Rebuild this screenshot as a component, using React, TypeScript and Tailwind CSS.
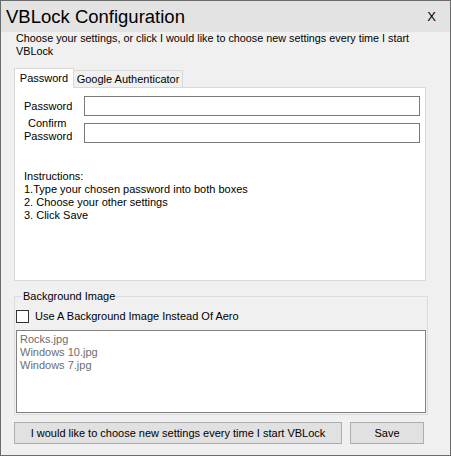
import { useState } from 'react';

function App() {
  const [useImage, setUseImage] = useState(false);
  const [tab, setTab] = useState<'password' | 'google'>('password');
  const images = ['Rocks.jpg', 'Windows 10.jpg', 'Windows 7.jpg'];

  return (
    <div
      className="w-[451px] h-[456px] flex flex-col border border-[#6b6b6b] bg-[#f0f0f0] text-[11px] leading-[13px] text-black overflow-hidden whitespace-nowrap"
      style={{ fontFamily: '"Liberation Sans", Arial, sans-serif' }}
    >
      {/* Title bar */}
      <div className="h-[31px] shrink-0 flex items-center justify-between bg-[#e3e3e3] pl-[5px] pr-[14px]">
        <span className="text-[18.5px] leading-[24px] pt-[1px]">VBLock Configuration</span>
        <span className="text-[13px] leading-[14px]">X</span>
      </div>

      {/* Body */}
      <div className="flex flex-col pl-[13px]">
        <p className="ml-[2px] text-[10.8px]">
          Choose your settings, or click I would like to choose new settings every time I start
          <br />
          VBLock
        </p>

        {/* Tabs */}
        <div className="mt-[10px] flex items-end h-[19px]">
          <button
            onClick={() => setTab('password')}
            className="h-[20px] w-[60px] bg-white border border-b-0 border-[#d9d9d9] relative z-10 -mb-[1px] text-[11px]"
          >
            Password
          </button>
          <button
            onClick={() => setTab('google')}
            className="h-[17px] w-[109px] bg-[#f0f0f0] border border-l-0 border-b-0 border-[#d9d9d9] text-[11px] leading-[15px] pt-[1px]"
          >
            Google Authenticator
          </button>
        </div>

        {/* Tab panel */}
        <div className="w-[412px] h-[194px] bg-white border border-[#d9d9d9] pt-[8px]">
          {tab === 'password' && (
            <>
              <div className="flex items-center">
                <span className="w-[69px] pl-[9px]">Password</span>
                <input type="password" className="w-[336px] h-[20px] border border-[#7a7a7a] bg-white outline-none" />
              </div>
              <div className="flex items-start mt-[1px]">
                <span className="w-[69px] pl-[9px]">
                  <span className="block pl-[4px]">Confirm</span>
                  <span className="block">Password</span>
                </span>
                <input type="password" className="mt-[6px] w-[336px] h-[20px] border border-[#7a7a7a] bg-white outline-none" />
              </div>
              <div className="mt-[27px] pl-[9px]">
                <p>Instructions:</p>
                <p>1.Type your chosen password into both boxes</p>
                <p>2. Choose your other settings</p>
                <p>3. Click Save</p>
              </div>
            </>
          )}
        </div>

        {/* Background image group */}
        <fieldset className="mt-[8px] w-[414px] border border-[#dcdcdc] pl-[1px] pb-[1px]">
          <legend className="ml-[6px] px-[1px] leading-[14px]">Background Image</legend>
          <label className="flex items-center mt-[5px] h-[16px]">
            <input
              type="checkbox"
              checked={useImage}
              onChange={(e) => setUseImage(e.target.checked)}
              className="appearance-none w-[13px] h-[13px] border border-[#333333] bg-white m-0"
            />
            <span className="ml-[6px]">Use A Background Image Instead Of Aero</span>
          </label>
          <ul className="mt-[6px] w-[410px] h-[83px] border border-[#828282] bg-white pl-[3px] pt-[2px] text-[#6d6d6d]">
            {images.map((img) => (
              <li key={img}>{img}</li>
            ))}
          </ul>
        </fieldset>

        {/* Buttons */}
        <div className="mt-[7px] flex">
          <button className="w-[328px] h-[22px] bg-[#e1e1e1] border border-[#adadad] text-[11px]">
            I would like to choose new settings every time I start VBLock
          </button>
          <button className="ml-[8px] w-[74px] h-[22px] bg-[#e1e1e1] border border-[#adadad] text-[11px]">
            Save
          </button>
        </div>
      </div>
    </div>
  );
}

export default App;
